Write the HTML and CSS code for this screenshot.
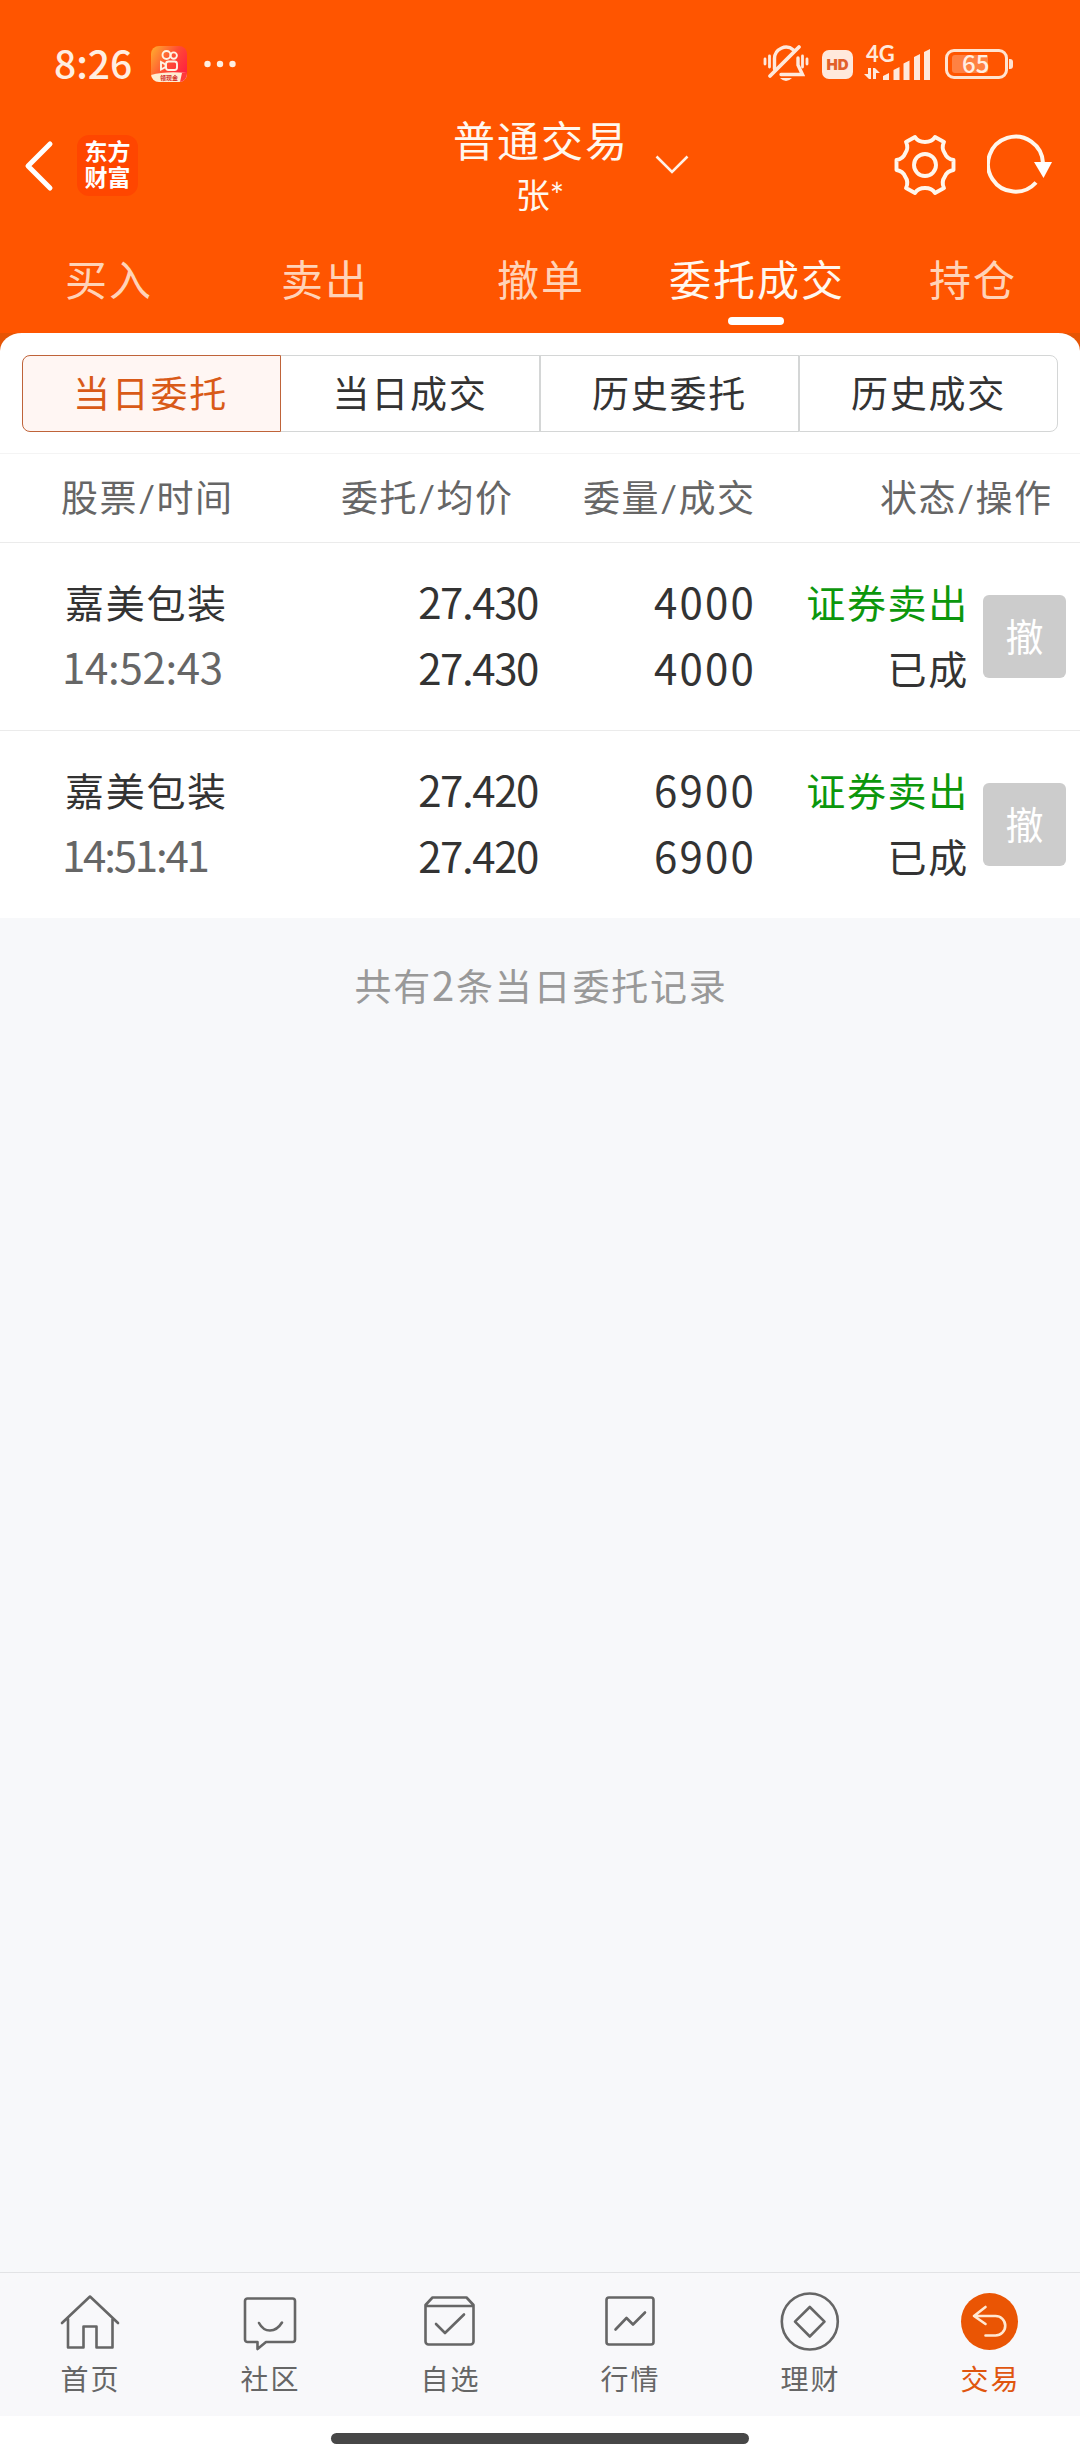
FILE: index.html
```html
<!DOCTYPE html>
<html lang="zh-CN">
<head>
  <meta charset="UTF-8" />
  <meta name="viewport" content="width=device-width, initial-scale=1.0" />
  <title>普通交易</title>
  <link rel="stylesheet" href="styles.css">
</head>
<body>
  <header>
    <div class="status-bar">
      <span class="clock">8:26</span>
      <svg class="app-badge" width="36" height="36" viewBox="0 0 36 36">
        <defs>
          <linearGradient id="badge-bg" x1="0" y1="0" x2="1" y2="0.6">
            <stop offset="0" stop-color="#ffb02e" />
            <stop offset="0.6" stop-color="#ff4a35" />
            <stop offset="1" stop-color="#ff2440" />
          </linearGradient>
          <clipPath id="badge-clip"><rect width="36" height="36" rx="8" /></clipPath>
        </defs>
        <g clip-path="url(#badge-clip)">
          <rect width="36" height="36" fill="url(#badge-bg)" />
          <path d="M0 29Q14 25 36 27V36H0z" fill="#ffeed2" />
          <path d="M29 36l2-9h5v9z" fill="#ff3a3a" />
          <text class="badge-text" x="9" y="33.500">领现金</text>
        </g>
        <g fill="none" stroke="#fff3e4" stroke-width="1.9">
          <circle cx="15.5" cy="9" r="4" />
          <circle cx="22.7" cy="9.6" r="3.2" />
          <rect x="15" y="15.5" width="11" height="8.5" rx="2.5" />
          <path d="M10 16v7.5l4.5-2.4v-2.7z" />
        </g>
      </svg>
      <svg class="more" width="32" height="8" viewBox="0 0 32 8" fill="#ffeee2">
        <circle cx="3.5" cy="4" r="3.2" /><circle cx="16" cy="4" r="3.2" /><circle cx="28.5" cy="4" r="3.2" />
      </svg>

      <svg class="mute" width="46" height="40" viewBox="0 0 46 40" fill="none" stroke="#ffe9dc" stroke-width="3" stroke-linecap="round">
        <path d="M2 15v5M6.5 12v11M39.5 12v11M44 15v5" stroke-width="2.8" />
        <path d="M11.500 25V14.500a11.500 11.500 0 0 1 19-8.500M35 14v7l4.500 9.500H18" stroke-width="3.4" />
        <path d="M7 32L36 3" stroke-width="3.8" />
        <path d="M17 34h12q-6 6-12 0z" fill="#ffe9dc" stroke="none" />
      </svg>
      <span class="hd">HD</span>
      <svg class="signal" width="68" height="56" viewBox="0 -10 68 56" fill="#ffe9dc">
        <text class="net" x="2" y="16">4G</text>
        <path d="M4 22h3v11H5l-5-5h4zM9 33V22h2l5 5h-4v6z" />
        <path d="M19 30l6-3v7h-6zM29.500 24l6-3v13h-6zM39.500 17.500l6-3v19.500h-6zM50 11l6-3v26h-6zM60 6l6-3v31h-6z" />
      </svg>
      <span class="battery"><span class="level">65</span></span>
      <span class="battery-tip"></span>
    </div>

    <div class="title-bar">
      <div class="title-left">
        <svg width="30" height="52" viewBox="0 0 30 52" fill="none" stroke="#fff" stroke-width="5" stroke-linecap="round" stroke-linejoin="round">
          <path d="M26 4L4 26l22 22" />
        </svg>
        <div class="brand">东方<br>财富</div>
      </div>
      <div class="title">
        <h1>普通交易</h1>
        <p>张*</p>
      </div>
      <div class="title-right">
        <svg class="chevron" width="34" height="20" viewBox="0 0 34 20" fill="none" stroke="#fff1e6" stroke-width="2.6">
          <path d="M1.500 1.500L17 17 32.500 1.500" />
        </svg>
        <svg class="gear" width="62" height="62" viewBox="-31 -31 62 62" fill="none" stroke="#fff6ec" stroke-width="3.900" stroke-linejoin="round">
          <circle r="11" />
          <path d="M-10 -28Q-7 -23 0 -23Q7 -23 10 -28L19 -23Q16 -17 19.900 -11.500Q22 -6 28.500 -5V5Q22 6 19.900 11.500Q16 17 19 23L10 28Q7 23 0 23Q-7 23 -10 28L-19 23Q-16 17 -19.900 11.500Q-22 6 -28.500 5V-5Q-22 -6 -19.900 -11.500Q-16 -17 -19 -23Z" />
        </svg>
        <svg class="refresh" width="66" height="62" viewBox="0 0 66 62">
          <path d="M56 29A27.500 27.500 0 1 0 49 48.500" fill="none" stroke="#fff6ec" stroke-width="4" />
          <path d="M47 28h18l-8.500 16z" fill="#fff" />
        </svg>
      </div>
    </div>

    <nav class="tabs">
      <a>买入</a>
      <a>卖出</a>
      <a>撤单</a>
      <a class="active">委托成交</a>
      <a>持仓</a>
    </nav>
  </header>

  <main>
    <div class="panel-wrap">
      <section class="panel">
        <div class="segments">
          <button class="active">当日委托</button>
          <button>当日成交</button>
          <button>历史委托</button>
          <button>历史成交</button>
        </div>
        <div class="list-head">
          <span>股票/时间</span>
          <span>委托/均价</span>
          <span>委量/成交</span>
          <span>状态/操作</span>
        </div>
        <div class="order">
          <div class="stock">嘉美包装<br><span class="time">14:52:43</span></div>
          <div class="price">27.430<br>27.430</div>
          <div class="amount">4000<br>4000</div>
          <div class="state"><span class="sell">证券卖出</span><br>已成</div>
          <button class="cancel">撤</button>
        </div>
        <div class="order">
          <div class="stock">嘉美包装<br><span class="time tight">14:51:41</span></div>
          <div class="price">27.420<br>27.420</div>
          <div class="amount">6900<br>6900</div>
          <div class="state"><span class="sell">证券卖出</span><br>已成</div>
          <button class="cancel">撤</button>
        </div>
      </section>
    </div>
    <p class="summary">共有<span class="count">2</span>条当日委托记录</p>
  </main>

  <footer>
    <nav class="bottom-nav">
      <a>
        <svg width="60" height="60" viewBox="0 0 60 60">
          <path d="M2 31L30 4.500 58 31M8 27v28.500h15.500V34.500h13V55.500H52.500V27" />
        </svg>
        首页
      </a>
      <a>
        <svg width="60" height="60" viewBox="0 0 60 60">
          <path d="M7.500 6.500h45a2.500 2.500 0 0 1 2.500 2.500v38.500a2.500 2.500 0 0 1-2.500 2.500H26l-8.500 7V50h-10A2.500 2.500 0 0 1 5 47.500V9a2.500 2.500 0 0 1 2.500-2.500z" />
          <path d="M19 31q4 7.500 11 7.500T42 30.500" />
        </svg>
        社区
      </a>
      <a>
        <svg width="60" height="60" viewBox="0 0 60 60">
          <path d="M5.500 13L12.500 5.500h34L53.500 13v36.500a3 3 0 0 1-3 3h-42a3 3 0 0 1-3-3zM5.500 14h48" />
          <path d="M16 32l9 9 19-18.500" />
        </svg>
        自选
      </a>
      <a>
        <svg width="60" height="60" viewBox="0 0 60 60">
          <rect x="6.500" y="5.500" width="47" height="47" rx="2.500" />
          <path d="M15.500 37.500L26.500 26l6.500 6.500L45 20.500" />
        </svg>
        行情
      </a>
      <a>
        <svg width="60" height="60" viewBox="0 0 60 60">
          <circle cx="29.800" cy="29.500" r="28" />
          <path d="M29.800 15L44.500 29.700 29.800 44.500 15 29.700z" />
        </svg>
        理财
      </a>
      <a class="active">
        <svg width="60" height="60" viewBox="0 0 60 60">
          <circle class="disc" cx="29.500" cy="29.500" r="28.500" />
          <path class="arrow" d="M25.500 15L14 24l11.500 8M14 24h21.500a9.750 9.750 0 0 1 0 19.500h-10" />
        </svg>
        交易
      </a>
    </nav>
    <div class="home-bar"><span></span></div>
  </footer>
</body>
</html>
```
FILE: styles.css
```css
* {
  box-sizing: border-box;
}

body {
  margin: 0;
  height: 2460px;
  display: flex;
  flex-direction: column;
  font-family: Lato, "Noto Sans CJK SC", sans-serif;
  background-color: #f7f8fa;
  color: #333;
}

h1, p {
  margin: 0;
  font-weight: normal;
}

button {
  font-family: inherit;
  padding: 0;
  border: none;
}

/* Narrow figures */
.clock,
.level,
.time,
.price,
.amount,
.count {
  font-family: "Noto Sans CJK SC", sans-serif;
}

header {
  height: 333px;
  background-color: #ff5500;
  color: #fff8ef;
}

/* Status bar */
.status-bar {
  height: 110px;
  padding: 18px 67px 0 54px;
  display: flex;
  align-items: center;
}

.clock {
  width: 97px;
  padding-bottom: 4px;
  font-size: 39px;
  font-weight: 500;
  line-height: 40px;
  color: #ffeee2;
}

.badge-text {
  font-size: 6px;
  font-weight: bold;
  fill: #d3302a;
}

.more {
  margin-left: 17px;
}

.mute {
  margin-left: auto;
}

.hd {
  width: 31px;
  height: 29px;
  margin-left: 13px;
  border-radius: 7px;
  background-color: #ffe9dc;
  color: #e2602a;
  font-family: Inter, sans-serif;
  font-size: 15px;
  font-weight: 900;
  line-height: 29px;
  text-align: center;
}

.signal {
  margin-left: 11px;
}

.net {
  font-size: 22px;
  font-weight: bold;
}

.battery {
  width: 63px;
  height: 30px;
  margin-left: 13px;
  padding: 3px 4px;
  border: 3px solid #ffe3d0;
  border-radius: 9px;
}

.level {
  display: block;
  width: 36px;
  height: 18px;
  border-radius: 3px;
  background-color: #ff8142;
  color: #ffeee2;
  font-size: 24px;
  font-weight: 500;
  line-height: 15px;
  text-indent: 10px;
}

.battery-tip {
  width: 4px;
  height: 10px;
  margin-left: 1px;
  border-radius: 0 3px 3px 0;
  background-color: #ffe3d0;
}

/* Title bar */
.title-bar {
  height: 110px;
  display: grid;
  grid-template-columns: 1fr 180px 1fr;
  align-items: center;
}

.title-left {
  display: flex;
  align-items: center;
  gap: 23px;
  padding: 1px 0 0 24px;
}

.brand {
  width: 61px;
  height: 61px;
  padding-top: 3px;
  border-radius: 12px;
  background-color: #ff4600;
  color: #fff;
  font-size: 23px;
  font-weight: bold;
  line-height: 26px;
  text-align: center;
}

.title {
  text-align: center;
  white-space: nowrap;
}

.title h1 {
  font-size: 42px;
  line-height: 56px;
  letter-spacing: 2px;
  text-indent: 2px;
}

.title p {
  padding-top: 3px;
  font-size: 34px;
  line-height: 46px;
}

.title-right {
  display: flex;
  align-items: center;
  padding-right: 27px;
}

.chevron {
  margin-left: 25px;
}

.gear {
  margin-left: auto;
}

.refresh {
  margin-left: 31px;
}

/* Trade tabs */
.tabs {
  display: grid;
  grid-template-columns: repeat(5, 1fr);
  height: 113px;
}

.tabs a {
  display: flex;
  flex-direction: column;
  align-items: center;
  padding-top: 30px;
  font-size: 42px;
  line-height: 60px;
  letter-spacing: 2px;
  text-indent: 2px;
  color: #ffd3b8;
}

.tabs .active {
  color: #fff8ef;
}

.tabs .active::after {
  content: "";
  width: 56px;
  height: 8px;
  margin-top: 7px;
  border-radius: 4px;
  background-color: #fff;
}

main {
  flex: 1;
}

/* Orders panel */
.panel-wrap {
  background-color: #e65505;
}

.panel {
  background-color: #fff;
  border-radius: 22px 22px 0 0 / 18px 18px 0 0;
}

.segments {
  display: grid;
  grid-template-columns: repeat(4, 1fr);
  height: 121px;
  padding: 22px 22px 21px;
  border-bottom: 1px solid #f4f4f4;
}

.segments button {
  padding-bottom: 4px;
  border: 1px solid #d4d6d6;
  background-color: #fff;
  color: #333;
  font-size: 37px;
  letter-spacing: 1.7px;
}

.segments .active + button {
  border-left-width: 0;
}

.segments button:last-child {
  border-radius: 0 8px 8px 0;
}

.segments .active {
  padding-right: 2px;
  border-color: #bf6339;
  border-radius: 8px 0 0 8px;
  background-color: #fff6f3;
  color: #d95a18;
}

.list-head {
  display: grid;
  grid-template-columns: 280px 242px 297px auto;
  height: 89px;
  padding-left: 61px;
  border-bottom: 1px solid #ebebeb;
  font-size: 37px;
  line-height: 88px;
  letter-spacing: 1.6px;
  white-space: nowrap;
  color: #666;
}

.order {
  display: grid;
  grid-template-columns: 240px 1fr 214px 213px 97px;
  align-items: center;
  height: 187px;
  padding: 0 14px 1px 65px;
  font-size: 42px;
  line-height: 66px;
  text-align: right;
}

.order + .order {
  height: 188px;
  border-top: 1px solid #ebebeb;
}

.stock,
.state {
  font-size: 39px;
  letter-spacing: 1.7px;
}

.stock {
  text-align: left;
}

.time {
  margin-left: -3px;
  font-size: 42px;
  line-height: 1;
  letter-spacing: -0.3px;
  color: #666;
}

.tight {
  letter-spacing: -2.2px;
}

.price,
.amount {
  padding-bottom: 4px;
}

.price {
  padding-right: 4px;
  letter-spacing: -1.4px;
}

.amount {
  letter-spacing: 2.2px;
}

.sell {
  color: #0c970c;
}

.cancel {
  width: 83px;
  height: 83px;
  padding-bottom: 4px;
  justify-self: end;
  border-radius: 6px;
  background-color: #ccc;
  color: #fff;
  font-size: 38px;
}

.summary {
  padding-top: 39px;
  font-size: 37px;
  line-height: 60px;
  letter-spacing: 1.8px;
  text-indent: 2px;
  text-align: center;
  color: #999;
}

.count {
  font-size: 40px;
  line-height: 1;
}

/* Bottom navigation */
.bottom-nav {
  display: grid;
  grid-template-columns: repeat(6, 1fr);
  height: 144px;
  border-top: 1px solid #e2e3e5;
  background-color: #f8f8fa;
}

.bottom-nav a {
  display: flex;
  flex-direction: column;
  align-items: center;
  padding-top: 19px;
  font-size: 28px;
  line-height: 55px;
  letter-spacing: 2px;
  text-indent: 1px;
  color: #666;
}

.bottom-nav svg {
  fill: none;
  stroke: #666;
  stroke-width: 2.6;
  stroke-linecap: round;
  stroke-linejoin: round;
}

.bottom-nav .active {
  color: #e0560f;
}

.bottom-nav .disc {
  fill: #ea5504;
  stroke: none;
}

.bottom-nav .arrow {
  stroke: #ffe8d2;
}

.home-bar {
  display: flex;
  justify-content: center;
  height: 44px;
  padding-top: 17px;
  background-color: #fff;
}

.home-bar span {
  width: 418px;
  height: 11px;
  border-radius: 6px;
  background-color: #474747;
}
```
